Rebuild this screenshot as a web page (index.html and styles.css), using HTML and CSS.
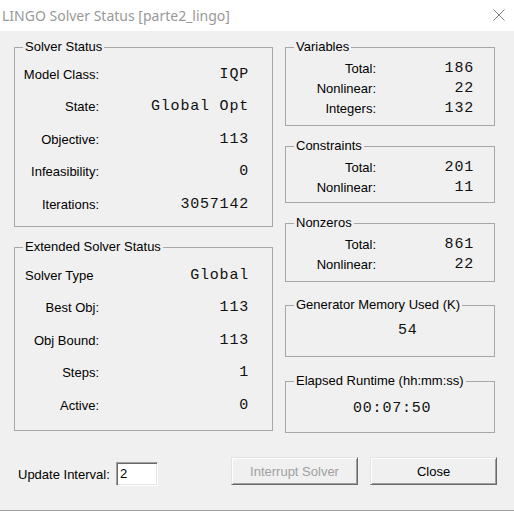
FILE: index.html
```html
<!DOCTYPE html>
<html>
<head>
<meta charset="utf-8">
<link rel="stylesheet" href="styles.css">
</head>
<body>
<div class="titlebar">
  <span class="title">LINGO Solver Status [parte2_lingo]</span>
  <svg class="close-x" width="12" height="12" viewBox="0 0 12 12"><path d="M0.5 0.5 L11.5 11.5 M11.5 0.5 L0.5 11.5" stroke="#808080" stroke-width="1" fill="none"/></svg>
</div>
<div class="window">
  <div class="panels">
    <div class="col-left">
      <fieldset class="box solver">
        <legend>Solver Status</legend>
        <div class="row big"><span class="lbl">Model Class:</span><span class="val">IQP</span></div>
        <div class="row big"><span class="lbl">State:</span><span class="val">Global Opt</span></div>
        <div class="row big"><span class="lbl">Objective:</span><span class="val">113</span></div>
        <div class="row big"><span class="lbl">Infeasibility:</span><span class="val">0</span></div>
        <div class="row big"><span class="lbl">Iterations:</span><span class="val">3057142</span></div>
      </fieldset>
      <fieldset class="box extended">
        <legend>Extended Solver Status</legend>
        <div class="row big"><span class="lbl left">Solver Type</span><span class="val">Global</span></div>
        <div class="row big"><span class="lbl">Best Obj:</span><span class="val">113</span></div>
        <div class="row big"><span class="lbl">Obj Bound:</span><span class="val">113</span></div>
        <div class="row big"><span class="lbl">Steps:</span><span class="val">1</span></div>
        <div class="row big"><span class="lbl">Active:</span><span class="val">0</span></div>
      </fieldset>
    </div>
    <div class="col-right">
      <fieldset class="box small variables">
        <legend>Variables</legend>
        <div class="row"><span class="lbl">Total:</span><span class="val">186</span></div>
        <div class="row"><span class="lbl">Nonlinear:</span><span class="val">22</span></div>
        <div class="row"><span class="lbl">Integers:</span><span class="val">132</span></div>
      </fieldset>
      <fieldset class="box small constraints">
        <legend>Constraints</legend>
        <div class="row"><span class="lbl">Total:</span><span class="val">201</span></div>
        <div class="row"><span class="lbl">Nonlinear:</span><span class="val">11</span></div>
      </fieldset>
      <fieldset class="box small nonzeros">
        <legend>Nonzeros</legend>
        <div class="row"><span class="lbl">Total:</span><span class="val">861</span></div>
        <div class="row"><span class="lbl">Nonlinear:</span><span class="val">22</span></div>
      </fieldset>
      <fieldset class="box single memory">
        <legend>Generator Memory Used (K)</legend>
        <div class="single-val mem-val">54</div>
      </fieldset>
      <fieldset class="box single runtime">
        <legend>Elapsed Runtime (hh:mm:ss)</legend>
        <div class="single-val time-val">00:07:50</div>
      </fieldset>
    </div>
  </div>
  <div class="footer">
    <label class="interval-label">Update Interval:</label>
    <div class="interval-input">2</div>
    <button class="btn disabled">Interrupt Solver</button>
    <button class="btn">Close</button>
  </div>
</div>
</body>
</html>
```

FILE: styles.css
```css
* { box-sizing: border-box; }
html, body { margin: 0; padding: 0; }
body {
  width: 514px;
  height: 513px;
  background: #ffffff;
  font-family: "Liberation Sans", Arial, sans-serif;
  font-size: 13px;
  color: #000;
  overflow: hidden;
}
.titlebar {
  height: 31px;
  background: #ffffff;
  display: flex;
  align-items: center;
  justify-content: space-between;
  padding: 0 9px 0 2px;
}
.title {
  font-family: "Noto Sans", "Open Sans", sans-serif;
  font-size: 14px;
  color: #999999;
  margin-top: -1px;
}
.close-x { display: block; margin-top: -1px; }
.window {
  height: 480px;
  background: #f0f0f0;
  border-bottom: 1px solid #a0a0a0;
}
.panels {
  display: grid;
  grid-template-columns: 259px 210px;
  column-gap: 12px;
  padding: 9px 0 0 14px;
  align-items: start;
}
.col-left, .col-right { display: flex; flex-direction: column; }
.box {
  margin: 0;
  padding: 0;
  min-width: 0;
  border: 1px solid #a7a7a7;
  border-radius: 0;
}
.box legend {
  font-size: 13px;
  line-height: 14px;
  padding: 0 2px;
  margin-left: 8px;
}
.solver { height: 187px; padding-top: 4px; padding-right: 23px; }
.extended { height: 191px; margin-top: 13px; padding-top: 5px; padding-right: 23px; }
.row {
  display: flex;
  align-items: center;
  height: 20px;
}
.row.big { height: 32.5px; }
.lbl {
  width: 84px;
  text-align: right;
  white-space: nowrap;
}
.lbl.left { text-align: left; padding-left: 10px; }
.val {
  flex: 1;
  text-align: right;
  font-family: "Liberation Mono", "Courier New", monospace;
  font-size: 15px;
  letter-spacing: 0.8px;
  color: #111;
  white-space: nowrap;
}
.small { padding-top: 4px; padding-right: 20px; }
.small .lbl { width: 90px; }
.variables { height: 86px; }
.constraints { height: 64px; margin-top: 13px; }
.nonzeros { height: 66px; margin-top: 13px; }
.single { height: 59px; }
.memory { margin-top: 16px; padding-top: 9px; }
.runtime { margin-top: 17px; padding-top: 11px; }
.single-val {
  height: 20px;
  line-height: 20px;
  font-family: "Liberation Mono", "Courier New", monospace;
  font-size: 15px;
  letter-spacing: 0.8px;
  color: #111;
  white-space: nowrap;
}
.mem-val { padding-left: 112px; }
.time-val { padding-left: 67px; }
.footer {
  display: flex;
  align-items: flex-start;
  margin-top: 24px;
  padding-left: 18px;
  height: 28px;
}
.interval-label {
  width: 98px;
  margin-top: 10px;
  line-height: 15px;
  white-space: nowrap;
}
.interval-input {
  margin-top: 5px;
  width: 42px;
  height: 24px;
  background: #fff;
  border: 1px solid;
  border-color: #a0a0a0 #ffffff #ffffff #a0a0a0;
  box-shadow: inset 1px 1px 0 #696969, inset -1px -1px 0 #e3e3e3;
  padding: 3px 0 0 3px;
  line-height: 16px;
  font-size: 13px;
}
.btn {
  width: 127px;
  height: 28px;
  margin: 0;
  padding: 0;
  font-family: "Liberation Sans", Arial, sans-serif;
  font-size: 13px;
  color: #000;
  background: #f0f0f0;
  border: 1px solid;
  border-color: #e3e3e3 #696969 #696969 #e3e3e3;
  box-shadow: inset 1px 1px 0 #ffffff, inset -1px -1px 0 #a0a0a0;
  border-radius: 0;
}
.btn.disabled { margin-left: 73px; color: #a0a0a0; }
.btn + .btn { margin-left: 12px; }
```
